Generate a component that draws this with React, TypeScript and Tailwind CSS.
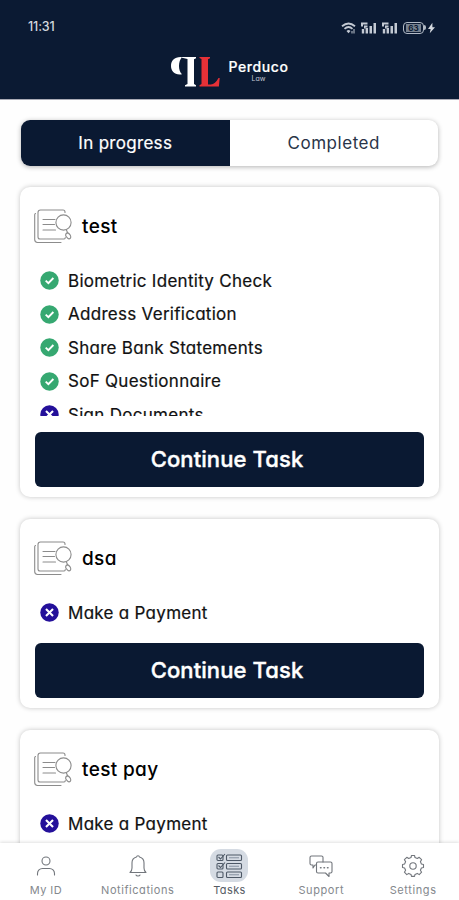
import React from "react";

interface Step {
  label: string;
  done: boolean;
}

interface TaskCardProps {
  title: string;
  steps: Step[];
  listClass: string;
  collapsed?: boolean;
}

const StepIcon: React.FC<{ done: boolean }> = ({ done }) => (
  <svg viewBox="0 0 20 20" className="size-[19px] shrink-0">
    <circle cx="10" cy="10" r="9.7" fill={done ? "#36a871" : "#24109a"} />
    {done ? (
      <path d="M6 10.2l2.8 2.7 5.3-5.5" fill="none" stroke="#fff" strokeWidth="2" />
    ) : (
      <path d="M6.3 6.3l7.4 7.4M13.7 6.3l-7.4 7.4" fill="none" stroke="#fff" strokeWidth="2.2" />
    )}
  </svg>
);

const DocumentIcon: React.FC = () => (
  <svg
    viewBox="0 0 38 36"
    className="-ml-px h-9 w-[38px] shrink-0"
    fill="none"
    stroke="#8c8c8c"
    strokeWidth="1.1"
    strokeLinecap="round"
  >
    <path d="M31 4.500V4a2 2 0 0 0-2-2H6.500A2.500 2.500 0 0 0 4 4.500V29a2 2 0 0 0 2 2h24a1.500 1.500 0 0 0 1.300-1.500" />
    <path d="M1.500 5.500A1.500 1.500 0 0 0 .7 7v24.500A3 3 0 0 0 3.500 34.500H27" />
    <path d="M9 11.500h12M9 16.500h11.500M9 22h12.500" />
    <circle cx="29.500" cy="14.500" r="7.600" />
    <path d="M32.500 22.200l1 2.300M33.500 24.500c-1.700 1-2.200 2-1.700 3.500M33.500 24.500c1.500 1 3.500 3.500 3.200 5-.5 1.800-2.700 1.800-3.400.3l-1.500-1.800" />
  </svg>
);

const TaskCard: React.FC<TaskCardProps> = ({ title, steps, listClass, collapsed }) => {
  return (
    <section className="rounded-[10px] bg-white px-[15px] pt-[21px] pb-[10px] shadow-[0_0_5px_rgba(0,0,0,0.23)]">
      <div className="flex h-9 items-center gap-[10px]">
        <DocumentIcon />
        <h2 className="pt-[2px] text-[19px] font-medium tracking-[0.35px] text-black">{title}</h2>
      </div>
      <ul className={`mt-5 overflow-hidden ${listClass}`}>
        {steps.map((step) => (
          <li key={step.label} className="flex h-[33.5px] items-center gap-[9px] pl-[5px]">
            <StepIcon done={step.done} />
            <span className="text-[17px] leading-[26px] tracking-[0.28px] whitespace-nowrap text-[#111] [-webkit-text-stroke:0.2px_#111]">
              {step.label}
            </span>
          </li>
        ))}
      </ul>
      {!collapsed && (
        <button className="block h-[55px] w-full rounded-[6px] bg-[#0a1932] pr-[5px] text-[22px] font-medium tracking-[0.1px] text-white [-webkit-text-stroke:0.4px_white]">
          Continue Task
        </button>
      )}
    </section>
  );
};

const SignalIcon: React.FC = () => (
  <svg viewBox="0 0 16 12" className="h-3 w-4" fill="#c3c9d3">
    <path d="M0 .5h6.500v2H2v2H0zM3 3.500h3.500v2H4.500v1H3zM.8 7h2.400v4.500H.8zM4.600 6H7v5.500H4.600zM8.500 4H11v7.500H8.500zM12.500 1H15v10.500h-2.500z" />
  </svg>
);

const Header: React.FC = () => (
  <header className="h-[99px] bg-[#0b1a33]">
    <div className="flex h-[55px] items-center justify-between pr-[24px] pl-[28px]">
      <span className="text-[12.5px] font-medium tracking-[-0.1px] text-[#d5d9df]">11:31</span>
      <div className="flex items-center gap-[5px]">
        <svg viewBox="0 0 15 12" className="h-3 w-[15px]" fill="none" stroke="#c3c9d3" strokeWidth="1.800">
          <path d="M1 4.300Q7.500-1.200 14 4.300M3.500 6.800Q7.500 3.200 11.500 6.800" />
          <path d="M5.500 9Q7.500 7 9.500 9L7.500 11.300z" fill="#c3c9d3" stroke="none" />
          <path d="M13 7v4.500M11 9v2.500" strokeWidth="1" />
        </svg>
        <SignalIcon />
        <SignalIcon />
        <div className="flex items-center">
          <div className="flex h-3 w-[21px] items-center justify-center rounded-[4px] border border-[#b2bac6]">
            <span className="bg-[#77818f] px-[2px] text-[8px] leading-[8px] font-bold text-[#0b1a33]">63</span>
          </div>
          <div className="h-[5px] w-[2px] rounded-r bg-[#b2bac6]" />
          <svg viewBox="0 0 8 12" className="ml-[2px] h-3 w-[7px]" fill="#d5d9df">
            <path d="M5 0L0 7h3l-1 5 6-7H5z" />
          </svg>
        </div>
      </div>
    </div>
    <div className="flex h-[34px] items-center pl-[170px]">
      <svg viewBox="0 0 50 32" className="h-8 w-[50px]">
        <path d="M12 1.200C5 .5 1 4.500 1 10s4 9.500 11 8.300C8 15 8 5 12 1.200z" fill="#fff" />
        <path d="M12 1H26v1.200l-2 1V28l2 1.200v1.300H15v-1.300l2.500-1.200V3L12 1.800z" fill="#fff" />
        <path d="M29.500 1H40v1.200l-2 1V28.500h2.800c3 0 5.500-2.500 7.700-6.500h1.200l-.8 8.500H29.500v-1.300l2-1.200V3l-2-1z" fill="#e63137" />
      </svg>
      <div className="-mt-[2px] ml-[8px] flex w-[61px] flex-col items-center text-white">
        <span className="text-[14px] leading-[16px] font-medium tracking-[0.6px] [-webkit-text-stroke:0.2px_white]">Perduco</span>
        <span className="text-[7px] leading-[8px] text-[#c3c9d3]">Law</span>
      </div>
    </div>
  </header>
);

const iconProps = {
  className: "size-6",
  viewBox: "0 0 24 24",
  fill: "none",
  stroke: "#72767c",
  strokeWidth: 1.1,
  strokeLinecap: "round" as const,
  strokeLinejoin: "round" as const,
};

const ProfileIcon = () => (
  <svg {...iconProps}>
    <circle cx="12" cy="7" r="4" />
    <path d="M3.500 21v-1.500a5 5 0 0 1 5-5h7a5 5 0 0 1 5 5V21" />
  </svg>
);

const BellIcon = () => (
  <svg {...iconProps}>
    <path d="M4 18.500c1.500-1.200 2-2.500 2-4.500V9a6 6 0 0 1 4.500-6c.3-1.600 2.700-1.600 3 0A6 6 0 0 1 18 9v5c0 2 .5 3.300 2 4.500zM10 21c.5 1.300 3.500 1.300 4 0" />
  </svg>
);

const TasksIcon = () => (
  <svg viewBox="0 0 28 26" className="h-[26px] w-7" fill="none" stroke="#4d5866" strokeWidth="1.100">
    {[2, 10.5, 19].map((y) => (
      <g key={y} transform={`translate(1 ${y})`}>
        <rect x="1" y="0" width="6" height="5.500" rx="1" />
        <rect x="10.500" y="0" width="15" height="5.500" rx="1" />
        <path d="M13 2.750h10" stroke="#8d98a6" />
      </g>
    ))}
    <path d="M3.500 4l2 2L10 1M3.500 12.500l2 2L10 9.500" />
  </svg>
);

const SupportIcon = () => (
  <svg {...iconProps}>
    <path d="M7.500 11H6l-2 3v-3H2.500A1.500 1.500 0 0 1 1 9.500v-6A1.500 1.500 0 0 1 2.500 2h10A1.500 1.500 0 0 1 14 3.500V8" />
    <path d="M9 8h12.500A1.500 1.500 0 0 1 23 9.500v8a1.500 1.500 0 0 1-1.500 1.500H20v3.500L16.500 19H9a1.500 1.500 0 0 1-1.500-1.500v-8A1.500 1.500 0 0 1 9 8z" />
    <path d="M11.500 13.700h.5M15 13.700h.5M18.500 13.700h.5" strokeWidth="1.500" />
  </svg>
);

const SettingsIcon = () => (
  <svg {...iconProps}>
    <path d="M10 3.500L10.500 1.500h3l.5 2 2.300 1 1.900-1.200 2.400 2.400-1.200 1.900 1 2.400 2.100.5v3l-2.100.5-1 2.300 1.200 1.900-2.400 2.400-1.900-1.200-2.300 1-.5 2h-3l-.5-2-2.300-1-1.900 1.200-2.400-2.400 1.200-1.900-1-2.300L1.500 13.500v-3l2.100-.5 1-2.400-1.200-1.900 2.400-2.400 1.900 1.200z" />
    <circle cx="12" cy="12" r="3.200" />
  </svg>
);

const tabs = [
  { label: "My ID", icon: <ProfileIcon />, textClass: "text-[#84888d] tracking-[0.4px]" },
  { label: "Notifications", icon: <BellIcon />, textClass: "text-[#84888d] tracking-[0.55px]" },
  { label: "Tasks", icon: <TasksIcon />, textClass: "text-[#555b64] tracking-[0.4px]", active: true },
  { label: "Support", icon: <SupportIcon />, textClass: "text-[#84888d] tracking-[0.6px]" },
  { label: "Settings", icon: <SettingsIcon />, textClass: "text-[#84888d] tracking-[0.6px]" },
];

const tasks: TaskCardProps[] = [
  {
    title: "test",
    listClass: "h-[152px] mb-4",
    steps: [
      { label: "Biometric Identity Check", done: true },
      { label: "Address Verification", done: true },
      { label: "Share Bank Statements", done: true },
      { label: "SoF Questionnaire", done: true },
      { label: "Sign Documents", done: false },
    ],
  },
  { title: "dsa", listClass: "h-[34px] mb-[13px]", steps: [{ label: "Make a Payment", done: false }] },
  { title: "test pay", listClass: "h-[34px] mb-[13px]", steps: [{ label: "Make a Payment", done: false }], collapsed: true },
];

const App: React.FC = () => {
  return (
    <div className="flex h-[900px] w-[459px] flex-col overflow-hidden bg-[#fefefe] font-['Inter','Open_Sans',sans-serif] [font-feature-settings:'cv11'_1,'ss03'_1]">
      <Header />
      <main className="min-h-0 flex-1 overflow-hidden border-t border-[#aaaab5] px-5 pt-5">
        <div className="mx-px flex h-[46px] overflow-hidden rounded-[9px] bg-white pt-px text-[17px] shadow-[0_1px_5px_rgba(0,0,0,0.3)]">
          <button className="-mt-px w-1/2 bg-[#0a1932] pt-[2px] tracking-[0.3px] text-white [-webkit-text-stroke:0.2px_white]">In progress</button>
          <button className="w-1/2 pt-px tracking-[0.55px] text-[#293448]">Completed</button>
        </div>
        <div className="mt-[21px] flex flex-col gap-[22px]">
          {tasks.map((task) => (
            <TaskCard key={task.title} {...task} />
          ))}
        </div>
      </main>
      <nav className="z-10 grid h-[57px] shrink-0 grid-cols-5 bg-white shadow-[0_-1px_3px_rgba(0,0,0,0.12)]">
        {tabs.map((tab) => (
          <button key={tab.label} className="flex flex-col items-center pt-[6px]">
            <span
              className={`flex h-[33px] w-[38px] items-center justify-center ${tab.active ? "rounded-[11px] bg-[#d5dbe3]" : ""}`}
            >
              {tab.icon}
            </span>
            <span className={`mt-px text-[11px] leading-[15px] whitespace-nowrap ${tab.textClass}`}>{tab.label}</span>
          </button>
        ))}
      </nav>
    </div>
  );
};

export default App;
